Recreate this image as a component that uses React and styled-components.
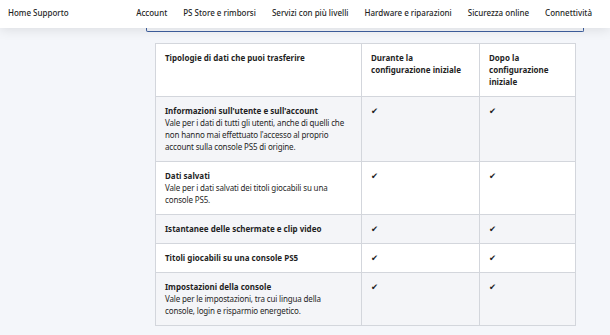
import React from "react";
import styled, { createGlobalStyle } from "styled-components";

const GlobalStyle = createGlobalStyle`
  html, body {
    margin: 0;
    padding: 0;
    background: #f4f6fa;
    font-family: "Noto Sans", "Open Sans", sans-serif;
    color: #1f1f1f;
  }
`;

const Page = styled.div`
  width: 610px;
  height: 335px;
  overflow: hidden;
  background: #f4f6fa;
`;

const Header = styled.header`
  position: relative;
  z-index: 2;
  height: 28px;
  background: #fff;
  display: flex;
  align-items: center;
  padding: 0 18px 3px 8px;
  box-sizing: border-box;
  box-shadow: 0 2px 12px rgba(0, 0, 0, 0.1);
`;

const Brand = styled.div`
  font-size: 8px;
  font-weight: 500;
  flex: 1;
`;

const NavList = styled.nav`
  display: flex;
  gap: 16px;
  font-size: 8px;
  font-weight: 500;
`;

const Content = styled.main`
  width: 438px;
  margin-left: 146px;
  padding: 0 8px 0 9px;
  box-sizing: border-box;
`;

const Notice = styled.div`
  height: 3px;
  margin: 0 -8px 0 -9px;
  border: 1.5px solid #3e5f9f;
  border-top: none;
  border-radius: 0 0 2px 2px;
`;

const Table = styled.table`
  margin-top: 11px;
  width: 420px;
  border-collapse: collapse;
  table-layout: fixed;
  font-size: 8px;
  line-height: 12px;
  border: 1px solid #d3d6dc;
`;

const Row = styled.tr`
  background: ${({ $shaded }) => ($shaded ? "#f4f5f8" : "#fff")};
`;

const Cell = styled.td`
  border: 1px solid #d3d6dc;
  padding: 8px ${({ $wide }) => ($wide ? 12 : 7)}px 8px 9px;
  vertical-align: top;
  font-weight: ${({ $head }) => ($head ? 700 : 400)};
`;

const Title = styled.div`
  font-weight: 700;
`;

const Desc = styled.div`
  letter-spacing: -0.15px;
`;

const Check = styled.span`
  font-family: "DejaVu Sans", sans-serif;
  font-size: 8.5px;
`;

const nav = [
  "Account",
  "PS Store e rimborsi",
  "Servizi con più livelli",
  "Hardware e riparazioni",
  "Sicurezza online",
  "Connettività",
];

const rows = [
  {
    title: "Informazioni sull'utente e sull'account",
    text: "Vale per i dati di tutti gli utenti, anche di quelli che non hanno mai effettuato l'accesso al proprio account sulla console PS5 di origine.",
  },
  {
    title: "Dati salvati",
    text: "Vale per i dati salvati dei titoli giocabili su una console PS5.",
  },
  { title: "Istantanee delle schermate e clip video" },
  { title: "Titoli giocabili su una console PS5" },
  {
    title: "Impostazioni della console",
    text: "Vale per le impostazioni, tra cui lingua della console, login e risparmio energetico.",
  },
];

export default function App() {
  return (
    <Page>
      <GlobalStyle />
      <Header>
        <Brand>Home Supporto</Brand>
        <NavList>
          {nav.map((n) => (
            <span key={n}>{n}</span>
          ))}
        </NavList>
      </Header>
      <Content>
        <Notice />
        <Table>
          <colgroup>
            <col style={{ width: 206 }} />
            <col style={{ width: 118 }} />
            <col style={{ width: 96 }} />
          </colgroup>
          <tbody>
            <Row>
              <Cell $head $wide>Tipologie di dati che puoi trasferire</Cell>
              <Cell $head>Durante la configurazione iniziale</Cell>
              <Cell $head>Dopo la configurazione iniziale</Cell>
            </Row>
            {rows.map((r, i) => (
              <Row key={r.title} $shaded={i % 2 === 0}>
                <Cell $wide>
                  <Title>{r.title}</Title>
                  {r.text && <Desc>{r.text}</Desc>}
                </Cell>
                <Cell>
                  <Check>✔</Check>
                </Cell>
                <Cell>
                  <Check>✔</Check>
                </Cell>
              </Row>
            ))}
          </tbody>
        </Table>
      </Content>
    </Page>
  );
}
